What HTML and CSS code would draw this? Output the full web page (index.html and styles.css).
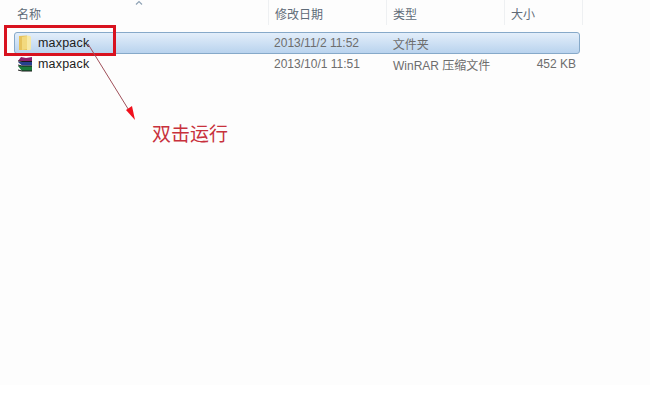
FILE: index.html
```html
<!DOCTYPE html>
<html>
<head>
    <meta charset="utf-8">
    <title>maxpack</title>
    <link rel="stylesheet" href="styles.css">
</head>
<body>
    <div class="explorer">
        <div class="list-head">
            <div class="col col-name">名称</div>
            <div class="col col-date">修改日期</div>
            <div class="col col-type">类型</div>
            <div class="col col-size">大小</div>
        </div>
        <svg class="sort-mark" width="8" height="5" viewBox="0 0 8 5"><path d="M1 4.5 L4 1.5 L7 4.5" fill="none" stroke="#8fa3b5" stroke-width="1.2"/></svg>

        <div class="row row-selected">
            <div class="cell cell-name">
                <svg class="file-icon" width="16" height="16" viewBox="0 0 16 16">
                    <path d="M2 1 L10 0.5 L10 15 L2 15 Z" fill="#e6c25c"/>
                    <path d="M10 0.5 L13 1 Q14 1 14 3 L14 13 Q14 15 13 15 L10 15 Z" fill="#f7e9a6"/>
                    <path d="M5 2 L10 1 L10 14 L5 15 Z" fill="#f2d97f"/>
                </svg>
                <span>maxpack</span>
            </div>
            <div class="cell cell-date">2013/11/2 11:52</div>
            <div class="cell cell-type">文件夹</div>
            <div class="cell cell-size"></div>
        </div>
        <div class="row">
            <div class="cell cell-name">
                <svg class="file-icon" width="16" height="16" viewBox="0 0 16 16">
                    <path d="M1 5 L4 1 L9 2 L15 1 L15 5 L5 5 Z" fill="#8e1f6b"/>
                    <path d="M1 6 L15 6 L15 9.5 L5 9.5 Z" fill="#27408f"/>
                    <path d="M1 10 L15 10 L15 15 L5 15 Z" fill="#1d7a3c"/>
                    <path d="M1 5 L5 5.5 M1 9 L5 10 M1 14 L5 15" stroke="#222" stroke-width="1"/>
                    <path d="M5 5.5 L15 5.5 M5 10 L15 10 M5 15 L15 15" stroke="#1a1a1a" stroke-width="1"/>
                </svg>
                <span>maxpack</span>
            </div>
            <div class="cell cell-date">2013/10/1 11:51</div>
            <div class="cell cell-type">WinRAR 压缩文件</div>
            <div class="cell cell-size">452 KB</div>
        </div>

        <div class="mark-box"></div>
        <svg class="arrow" width="60" height="90" viewBox="0 0 60 90">
            <line x1="6" y1="2" x2="48" y2="70" stroke="#a0505a" stroke-width="1"/>
            <path d="M53 78 L44 68 L50 64 Z" fill="#f0101c"/>
        </svg>
        <div class="note">双击运行</div>
    </div>
</body>
</html>
```

FILE: styles.css
```css
body {
    margin: 0;
    background-color: #fff;
    font-family: "Liberation Sans", "Noto Sans CJK SC", sans-serif;
    overflow: hidden;
}

.explorer {
    position: relative;
    height: 385px;
    padding-left: 14px;
    background-color: #fdfdfd;
    box-sizing: border-box;
}

.list-head {
    display: flex;
    height: 32px;
    width: 569px;
    font-size: 12px;
    color: #5f6b78;
}

.col {
    box-sizing: border-box;
    height: 25px;
    line-height: 30px;
    padding-left: 7px;
    border-right: 1px solid #eef0f2;
}

.col-name { width: 255px; padding-left: 3px; }
.col-date { width: 118px; padding-left: 6px; }
.col-type { width: 118px; padding-left: 6px; }
.col-size { width: 78px; padding-left: 6px; }

.sort-mark {
    position: absolute;
    left: 135px;
    top: 0;
}

.row {
    display: flex;
    align-items: center;
    box-sizing: border-box;
    width: 566px;
    height: 20px;
    font-size: 12px;
    color: #6d6d6d;
}

.row-selected {
    height: 22px;
    border: 1px solid #86a9c9;
    border-radius: 3px;
    background: linear-gradient(to bottom, #e3eefa, #b9d3ee);
}

.cell {
    box-sizing: border-box;
    white-space: nowrap;
}

.cell-name {
    display: flex;
    align-items: center;
    width: 255px;
    padding-left: 3px;
    color: #1c1c1c;
    font-size: 12.5px;
    letter-spacing: 0.2px;
}

.row-selected .cell-name { padding-left: 2px; }

.file-icon { margin-right: 5px; }

.cell-date { width: 118px; padding-left: 5px; }
.cell-type { width: 118px; padding-left: 6px; }
.cell-size { width: 75px; text-align: right; padding-right: 4px; }

.mark-box {
    position: absolute;
    left: 4px;
    top: 25px;
    width: 106px;
    height: 25px;
    border: 3px solid #d8121f;
}

.arrow {
    position: absolute;
    left: 82px;
    top: 42px;
}

.note {
    position: absolute;
    left: 152px;
    top: 124px;
    font-size: 19px;
    line-height: 22px;
    color: #c8313c;
}
```
